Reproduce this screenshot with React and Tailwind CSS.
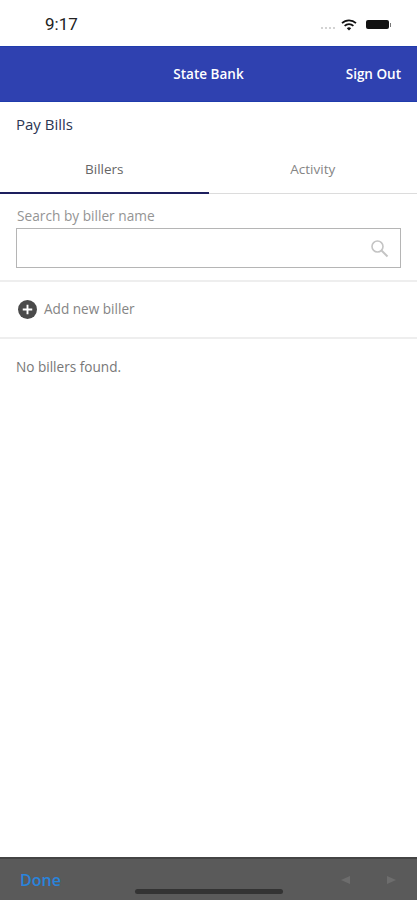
import React from "react";

const sans = { fontFamily: '"Open Sans", sans-serif' };

function StatusBar() {
  return (
    <div className="flex h-[46px] items-center justify-between pl-[45px] pt-[3px]">
      <span className="text-[17px] font-normal text-[#222] font-['Roboto',sans-serif]">9:17</span>
      <div className="mr-[26px] flex items-center">
        <div className="mr-[6px] mt-[6px] flex gap-[2px]">
          <span className="h-[2px] w-[2px] rounded-full bg-[#c4c4c4]" />
          <span className="h-[2px] w-[2px] rounded-full bg-[#c4c4c4]" />
          <span className="h-[2px] w-[2px] rounded-full bg-[#c4c4c4]" />
          <span className="h-[2px] w-[2px] rounded-full bg-[#c4c4c4]" />
        </div>
        <svg className="mr-[9px]" width="16" height="12" viewBox="0 0 16 12" fill="none" stroke="#111" strokeWidth="1.7">
          <path d="M1 4.2a10 10 0 0 1 14 0" />
          <path d="M3.6 6.8a6.4 6.4 0 0 1 8.8 0" />
          <path d="M8 11.5 5.8 9.2a3.2 3.2 0 0 1 4.4 0z" fill="#111" stroke="none" />
        </svg>
        <div className="flex items-center">
          <div className="h-[9px] w-[23px] rounded-[2px] bg-[#111]" />
          <div className="ml-[1px] h-[4px] w-[1px] bg-[#777]" />
        </div>
      </div>
    </div>
  );
}

export default function App() {
  return (
    <div className="relative flex h-[900px] w-[417px] flex-col overflow-hidden bg-white" style={sans}>
      <StatusBar />

      {/* 상단 바 */}
      <div className="relative flex h-[56px] items-center justify-end border-y border-[#1f3cac] bg-[#2f41b0] pr-[16px] text-[13.5px] font-semibold text-white">
        <span className="absolute left-0 right-0 text-center">State Bank</span>
        <span>Sign Out</span>
      </div>

      <div className="flex h-[45px] items-center px-[16px] text-[15px] font-medium text-[#2b3553]">Pay Bills</div>

      {/* 탭 */}
      <div className="flex h-[47px] border-b border-[#dcdcdc] pb-[1px] text-[13.5px]">
        <div className="-mb-[2px] flex w-1/2 items-center justify-center border-b-2 border-[#1d1f5e] pb-[1px] text-[#666]">Billers</div>
        <div className="flex w-1/2 items-center justify-center text-[#858585]">Activity</div>
      </div>

      {/* 검색 */}
      <div className="border-b-2 border-[#eeeeee] px-[16px] pb-[12px] pt-[13px]">
        <div className="pl-[1px] text-[13.7px] leading-[18px] text-[#949494]">Search by biller name</div>
        <div className="mt-[3px] flex h-[40px] items-center justify-end border border-[#b5b5b5] pr-[13px]">
          <svg className="-mr-[2px]" width="19" height="19" viewBox="0 0 19 19" fill="none" stroke="#c4c4c4" strokeWidth="1.6">
            <circle cx="7.5" cy="7.5" r="5.5" />
            <path d="m11.5 11.5 6 6" strokeWidth="2" />
          </svg>
        </div>
      </div>

      <div className="flex h-[57px] items-center gap-[7px] border-b-2 border-[#eeeeee] pl-[18px] pr-[17px] text-[13.6px] text-[#858585]">
        <svg width="19" height="19" viewBox="0 0 20 20">
          <circle cx="10" cy="10" r="10" fill="#4a4a4a" />
          <path d="M10 5v10M5 10h10" stroke="#fff" strokeWidth="2" />
        </svg>
        <span>Add new biller</span>
      </div>

      <div className="px-[16px] pt-[19px] text-[13.6px] leading-[18px] text-[#777]">No billers found.</div>

      {/* 키보드 툴바 */}
      <div className="relative mt-auto flex h-[43px] items-center justify-between border-t-2 border-[#444] bg-[#5a5a5a] pl-[20px] pr-[21px]">
        <span className="text-[16px] font-semibold text-[#2a84dc]">Done</span>
        <div className="flex items-center gap-[37px]">
          <svg width="9" height="8" viewBox="0 0 9 8"><path d="M0 4 9 0v8z" fill="#6d6d6d" /></svg>
          <svg width="9" height="8" viewBox="0 0 9 8"><path d="M9 4 0 0v8z" fill="#6d6d6d" /></svg>
        </div>
        <div className="absolute bottom-[6px] left-[135px] h-[5px] w-[148px] rounded-full bg-[#333]" />
      </div>
    </div>
  );
}
